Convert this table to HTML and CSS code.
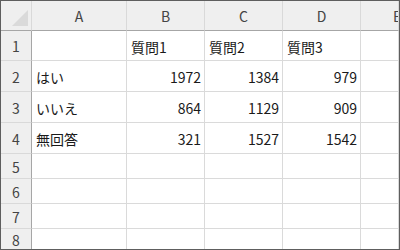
FILE: index.html
```html
<!DOCTYPE html>
<html lang="ja">
<head>
<meta charset="utf-8">
<link rel="stylesheet" href="styles.css">
</head>
<body>
<div class="frame">
  <div class="sheet">
    <div class="corner"><span class="tri"></span></div>
    <div class="ch">A</div><div class="ch">B</div><div class="ch">C</div><div class="ch">D</div><div class="ch last">E</div>

    <div class="rh">1</div>
    <div class="c"></div><div class="c">質問1</div><div class="c">質問2</div><div class="c">質問3</div><div class="c"></div>

    <div class="rh">2</div>
    <div class="c">はい</div><div class="c num">1972</div><div class="c num">1384</div><div class="c num">979</div><div class="c"></div>

    <div class="rh">3</div>
    <div class="c">いいえ</div><div class="c num">864</div><div class="c num">1129</div><div class="c num">909</div><div class="c"></div>

    <div class="rh">4</div>
    <div class="c">無回答</div><div class="c num">321</div><div class="c num">1527</div><div class="c num">1542</div><div class="c"></div>

    <div class="rh">5</div>
    <div class="c"></div><div class="c"></div><div class="c"></div><div class="c"></div><div class="c"></div>

    <div class="rh">6</div>
    <div class="c"></div><div class="c"></div><div class="c"></div><div class="c"></div><div class="c"></div>

    <div class="rh">7</div>
    <div class="c"></div><div class="c"></div><div class="c"></div><div class="c"></div><div class="c"></div>

    <div class="rh">8</div>
    <div class="c"></div><div class="c"></div><div class="c"></div><div class="c"></div><div class="c"></div>
  </div>
</div>
</body>
</html>
```
FILE: styles.css
```css
* { box-sizing: border-box; }
html, body { margin: 0; padding: 0; background: #ffffff; }
body {
  font-family: "Noto Sans CJK JP", "Noto Sans", sans-serif;
  font-size: 14px;
  color: #1a1a1a;
}
.frame {
  width: 400px;
  height: 250px;
  border: 1px solid #5e5e5e;
  overflow: hidden;
  background: #ffffff;
}
.sheet {
  display: grid;
  grid-template-columns: 31px 95px 78px 78px 78px 1fr;
  grid-template-rows: 30px 30px 31px 31px 31px 25px 25px 25px 1fr;
  height: 100%;
}
.corner {
  background: #efefef;
  border-right: 1px solid #d9d9d9;
  border-bottom: 1px solid #a6a6a6;
  position: relative;
}
.tri {
  position: absolute;
  left: 11px;
  top: 9px;
  width: 0;
  height: 0;
  border-left: 16px solid transparent;
  border-bottom: 16px solid #dadada;
}
.ch {
  background: #efefef;
  border-right: 1px solid #d9d9d9;
  border-bottom: 1px solid #a6a6a6;
  color: #444444;
  display: flex;
  align-items: center;
  justify-content: center;
  padding-top: 1px;
}
.ch.last {
  justify-content: flex-start;
  padding-left: 32px;
  overflow: hidden;
  white-space: nowrap;
}
.rh {
  background: #efefef;
  border-right: 1px solid #a6a6a6;
  border-bottom: 1px solid #d9d9d9;
  color: #444444;
  display: flex;
  align-items: center;
  justify-content: center;
  padding-top: 1px;
}
.c {
  border-right: 1px solid #dadada;
  border-bottom: 1px solid #dadada;
  display: flex;
  align-items: center;
  padding: 2px 3px 0 4px;
  white-space: nowrap;
  overflow: hidden;
}
.c.num { justify-content: flex-end; }
```
